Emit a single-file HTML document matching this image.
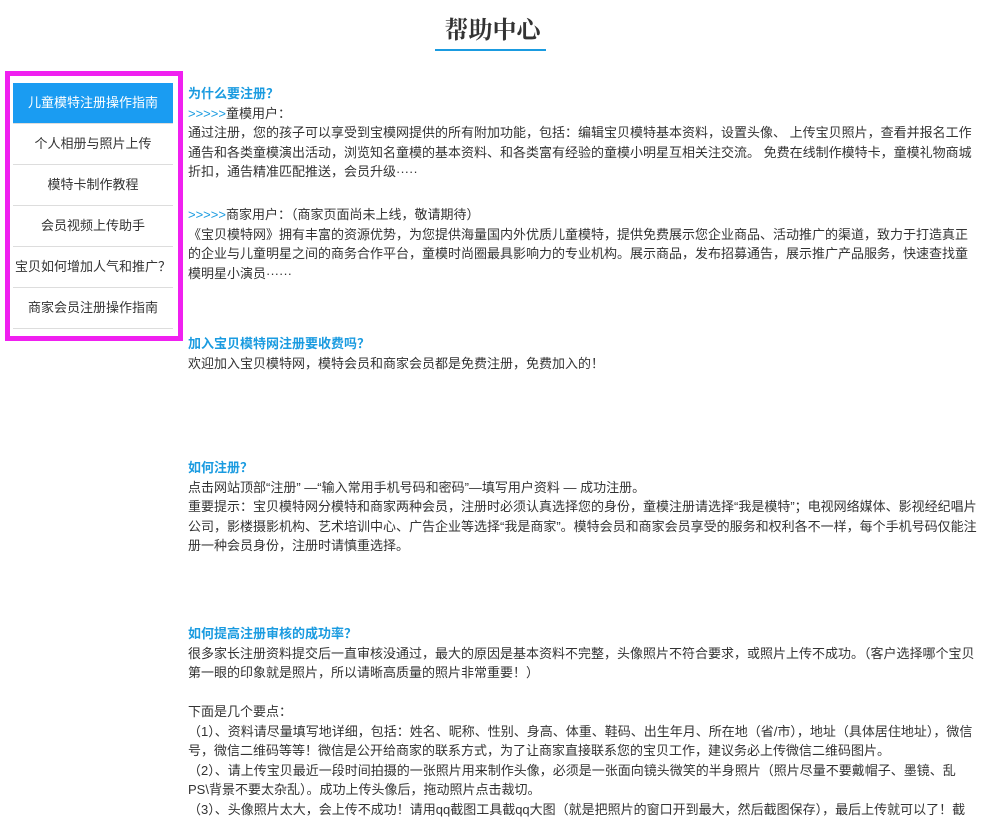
<!DOCTYPE html>
<html><head><meta charset="utf-8"><style>
body{margin:0;width:1000px;height:823px;overflow:hidden;background:#fff;font-family:"Liberation Sans","Noto Sans CJK SC","WenQuanYi Zen Hei",sans-serif;color:#333;font-size:13px;}
.t{position:absolute;left:0;width:985px;text-align:center;top:10px;font-size:24px;color:#333;font-family:"Liberation Serif","Noto Serif CJK SC",serif;font-weight:bold;}
.ul{position:absolute;left:435px;top:49px;width:111px;height:2px;background:#1a9be0;}
.box{position:absolute;left:5px;top:71px;width:168px;height:260px;border:5px solid #f020f0;}
.menu{position:absolute;left:3px;top:7px;width:160px;}
.menu div{height:40px;line-height:40px;text-align:center;border-bottom:1px solid #ddd;color:#333;font-size:13px;background:#fff;white-space:nowrap;}
.menu div.a{background:#1a9cf2;color:#fff;}
.b{position:absolute;left:188px;width:790px;line-height:19.5px;}
.h{color:#1a9be0;font-weight:bold;font-size:13px;}
.g{color:#1a9be0;}
</style></head><body>
<div class="t">帮助中心</div><div class="ul"></div>
<div class="box"><div class="menu">
<div class="a">儿童模特注册操作指南</div><div>个人相册与照片上传</div><div>模特卡制作教程</div><div>会员视频上传助手</div><div>宝贝如何增加人气和推广？</div><div>商家会员注册操作指南</div>
</div></div>
<div class="b" style="top:84px"><div class="h">为什么要注册？</div><span class="g">&gt;&gt;&gt;&gt;&gt;</span>童模用户：<br>通过注册，您的孩子可以享受到宝模网提供的所有附加功能，包括：编辑宝贝模特基本资料，设置头像、 上传宝贝照片，查看并报名工作通告和各类童模演出活动，浏览知名童模的基本资料、和各类富有经验的童模小明星互相关注交流。 免费在线制作模特卡，童模礼物商城折扣，通告精准匹配推送，会员升级·····</div>
<div class="b" style="top:205px"><span class="g">&gt;&gt;&gt;&gt;&gt;</span>商家用户：（商家页面尚未上线，敬请期待）<br>《宝贝模特网》拥有丰富的资源优势，为您提供海量国内外优质儿童模特，提供免费展示您企业商品、活动推广的渠道，致力于打造真正的企业与儿童明星之间的商务合作平台，童模时尚圈最具影响力的专业机构。展示商品，发布招募通告，展示推广产品服务，快速查找童模明星小演员······</div>
<div class="b" style="top:334px"><div class="h">加入宝贝模特网注册要收费吗？</div>欢迎加入宝贝模特网，模特会员和商家会员都是免费注册，免费加入的！</div>
<div class="b" style="top:458px"><div class="h">如何注册？</div>点击网站顶部“注册” —“输入常用手机号码和密码”—填写用户资料 — 成功注册。<br>重要提示：宝贝模特网分模特和商家两种会员，注册时必须认真选择您的身份，童模注册请选择“我是模特”；电视网络媒体、影视经纪唱片公司，影楼摄影机构、艺术培训中心、广告企业等选择“我是商家”。模特会员和商家会员享受的服务和权利各不一样，每个手机号码仅能注册一种会员身份，注册时请慎重选择。</div>
<div class="b" style="top:624px"><div class="h">如何提高注册审核的成功率？</div>很多家长注册资料提交后一直审核没通过，最大的原因是基本资料不完整，头像照片不符合要求，或照片上传不成功。（客户选择哪个宝贝第一眼的印象就是照片，所以请晰高质量的照片非常重要！）<br><br>下面是几个要点：<br>（1）、资料请尽量填写地详细，包括：姓名、昵称、性别、身高、体重、鞋码、出生年月、所在地（省/市），地址（具体居住地址），微信号，微信二维码等等！微信是公开给商家的联系方式，为了让商家直接联系您的宝贝工作，建议务必上传微信二维码图片。<br>（2）、请上传宝贝最近一段时间拍摄的一张照片用来制作头像，必须是一张面向镜头微笑的半身照片（照片尽量不要戴帽子、墨镜、乱PS\背景不要太杂乱）。成功上传头像后，拖动照片点击裁切。<br>（3）、头像照片太大，会上传不成功！请用qq截图工具截qq大图（就是把照片的窗口开到最大，然后截图保存），最后上传就可以了！截</div>
</body></html>
